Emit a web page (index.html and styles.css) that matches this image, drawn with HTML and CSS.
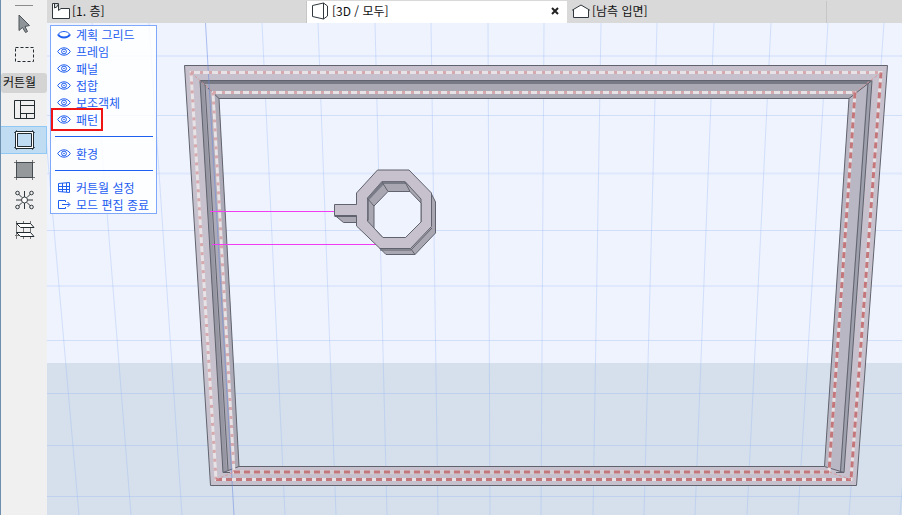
FILE: index.html
```
<!DOCTYPE html>
<html lang="ko">
<head>
    <meta charset="UTF-8">
    <meta name="viewport" content="width=device-width, initial-scale=1.0">
    <title>커튼월</title>
    <link rel="stylesheet" href="styles.css">
</head>
<body>
    <svg class="defs" aria-hidden="true">
        <symbol id="eye" viewBox="0 0 14 11">
            <path d="M0.7 5.5C3.5 0.6 10.5 0.6 13.3 5.5C10.5 10.4 3.5 10.4 0.7 5.5Z" fill="none" stroke="currentColor"/>
            <circle cx="7" cy="5.5" r="2.4" fill="none" stroke="currentColor"/>
            <circle cx="7" cy="5.5" r="0.8" fill="currentColor"/>
        </symbol>
    </svg>

    <aside class="toolbox">
        <div class="grip"></div>
        <button class="tool" aria-label="화살표">
            <svg width="24" height="24" viewBox="0 0 24 24"><path d="M7 3V18.500L10.500 15.500L13.500 20.500L15.500 19.500L13 14.500L17.500 13.500Z" fill="#8f9498" stroke="#4d5459"/></svg>
        </button>
        <button class="tool" aria-label="선택 영역">
            <svg width="24" height="24" viewBox="0 0 24 24"><rect x="3.500" y="5.500" width="18" height="14" fill="none" stroke="#222b30" stroke-dasharray="3 2"/></svg>
        </button>
        <h2>커튼월</h2>
        <button class="tool" aria-label="구성표">
            <svg width="24" height="24" viewBox="0 0 24 24"><path d="M2.500 2.500H22.500V20.500H2.500ZM8.500 2.500V20.500M8.500 7.500H22.500M8.500 15.500H22.500M14.500 15.500V20.500" fill="none" stroke="#222b30"/></svg>
        </button>
        <button class="tool active" aria-label="프레임">
            <svg width="24" height="24" viewBox="0 0 24 24"><path d="M2 4.500H23M2 19.500H23M4.500 2V22M20.500 2V22" stroke="#56626b"/><path d="M3.500 3.500H21.500V20.500H3.500ZM5.500 5.500V18.500H19.500V5.500Z" fill="#fff" fill-rule="evenodd" stroke="#222b30"/></svg>
        </button>
        <button class="tool" aria-label="패널">
            <svg width="24" height="24" viewBox="0 0 24 24"><path d="M2 4.500H23M2 19.500H23M4.500 2V22M20.500 2V22" stroke="#777"/><rect x="4.500" y="4.500" width="16" height="15" fill="#96999c" stroke="#444c52"/></svg>
        </button>
        <button class="tool" aria-label="접합">
            <svg width="24" height="24" viewBox="0 0 24 24" fill="none" stroke="#30383d"><path d="M12.500 3V9M12.500 15V21M4 12H9M16 12H21M6.500 6L10 9.500M18.500 6L15 9.500M6.500 18L10 14.500M18.500 18L15 14.500"/><circle cx="12.500" cy="12" r="3" fill="#fff"/><circle cx="5.500" cy="5" r="1.800"/><circle cx="19.500" cy="5" r="1.800"/><circle cx="5.500" cy="19" r="1.800"/><circle cx="19.500" cy="19" r="1.800"/></svg>
        </button>
        <button class="tool" aria-label="보조객체">
            <svg width="24" height="24" viewBox="0 0 24 24" fill="none" stroke="#222b30"><path d="M4.500 3V21M11.500 3V21M18.500 3V21M3 17.500H20" stroke="#777"/><path d="M4.500 5.500H18.500L22 9.500H8.500ZM4.500 14.500H18.500L22 18.500H8.500Z" fill="#fff"/></svg>
        </button>
    </aside>

    <div class="workspace">
        <nav class="tabs">
            <a class="tab" href="#">
                <svg width="20" height="18" viewBox="0 0 20 18"><path d="M1.500 1.500H7.500V8.500L10 6.500H18.500V16.500H1.500ZM3.500 2V6Q6.500 5.500 7.500 2" fill="#fff" stroke="#30383d"/></svg>
                <span>[1. 층]</span>
            </a>
            <a class="tab current" href="#">
                <svg width="20" height="18" viewBox="0 0 20 18"><path d="M1.500 3.500L12.500 1L16.500 4V14L12.500 17L1.500 14.500ZM12.500 1V17" fill="#fff" stroke="#30383d"/></svg>
                <span>[3D / 모두]</span>
                <svg class="close" width="8" height="8" viewBox="0 0 8 8"><path d="M1 1L7 7M7 1L1 7" stroke="#222" stroke-width="2"/></svg>
            </a>
            <a class="tab" href="#">
                <svg width="20" height="18" viewBox="0 0 20 18"><path d="M2.500 15.500V8H1.500L10 3L18.500 8H17.500V15.500Z" fill="#fff" stroke="#30383d"/></svg>
                <span>[남측 입면]</span>
            </a>
        </nav>

        <main class="viewport">
            <svg class="scene" viewBox="47 23 855 492" preserveAspectRatio="xMinYMin slice">
                <rect x="47" y="23" width="855" height="340" fill="#eef3fe"/>
                <rect x="47" y="363" width="855" height="152" fill="#d5e0ec"/>
                <!-- grid -->
                <path class="grid" d="M47 115.500H902M47 230.500H902M47 340.500H902M47 393.500H902M47 445.500H902M47 496.500H902"/>
                <path class="grid wide" d="M47 56H902M47 173.500H902M47 286H902"/>
                <path class="grid" d="M36 23L79 515M92 23L131 515M149 23L182 515M262 23L285 515M318 23L336 515M375 23L387 515M431 23L438 515M488 23L490 515M544 23L541 515M601 23L593 515M657 23L644 515M714 23L695 515M771 23L747 515M828 23L798 515M884 23L849 515M941 23L900 515"/>
                <!-- outer frame -->
                <path d="M184.500 65.500H887.500L856.500 485.500H210.500ZM219 98.500L239 466.500H824.500L849 98.500Z" fill="#c6c1cc" fill-rule="evenodd"/>
                <path d="M200 81H872L849 98.500H219Z" fill="#aaa8b2"/>
                <path d="M200 81L219 98.500L239 466.500L223 473Z" fill="#adabb7"/>
                <path d="M872 81L849 98.500L824.500 466.500L844 473Z" fill="#bab7c4"/>
                <path d="M200 81H872L868 84H204Z" fill="#777984"/>
                <path d="M200 81L204 85L227 472H223Z" fill="#9697a2"/>
                <path d="M872 81L867 85L840 472H844Z" fill="#9fa0ad"/>
                <path class="edge" d="M184.500 65.500H887.500L856.500 485.500H210.500ZM219 98.500H849L824.500 466.500H239ZM200 80.500H872L844 472.500L824.500 466.500M200 80.500L223 472.500L239 466.500M223 472.500H230M844 472.500H836M868 83L840.500 471M205 85L228 470M200 80.500L219 98.500M872 80.500L849 98.500"/>
                <path class="axis" d="M205.500 23L234 515"/>
                <!-- dashed pattern lines -->
                <path class="dash-base" d="M191 72.500H881L851 479.500H216ZM213 92.500H855L829 472H234Z"/>
                <path class="dash soft" d="M191 72.500H881M213 92.500H855M191 72.500L216 479.500M213 92.500L234 472"/>
                <path class="dash strong" d="M216 479.500H851M881 72.500L851 479.500M855 92.500L829 472"/>
                <path class="dash shade" d="M234 472H829"/>
                <path class="dash strong" d="M234 472H829"/>
                <path class="corner" d="M191 72.500L213 92.500M881 72.500L855 92.500M216 479.500L234 472M851 479.500L829 472"/>
                <!-- guide lines -->
                <path d="M210 211.500H334M212 244.500H376" stroke="#f03cf5"/>
                <!-- octagon ring -->
                <path d="M431 193L435.500 202V233L415 254.500H386L380 248.500Z" fill="#a9a7b2" stroke="#60636d"/>
                <path d="M334.500 215L343.500 222.500H357V215Z" fill="#aaa8b3" stroke="#60636d"/>
                <path d="M377.500 170H409L431.500 193V226.500L410.500 248.500H380L356.500 226V215.500H334.500V204.500H356.500V193Z" fill="#c6c1cc" stroke="#60636d"/>
                <path d="M382 181.500H405L421 199V222L405.500 237.500H383L367.500 221V198Z" fill="#a9a7b2" stroke="#60636d"/>
                <path d="M382 181.500H405L407 184H384L369 200V221L367.500 219V198Z" fill="#787a85"/>
                <path d="M388 191.500H410L421 203V222L405.500 237.500H383L374 228V206Z" fill="#eef3fe" stroke="#60636d"/>
                <path d="M382 182L388 191.500M405 182L410 191.500M367 198L374 206M380 250H411L432 228M410.500 248.500L415 254.500M334.500 216.500H356" fill="none" stroke="#60636d"/>
            </svg>

            <div class="menu">
                <button><svg width="14" height="11" viewBox="0 0 14 11"><path d="M1 5.500C3.500 1.500 10.500 1.500 13 5.500" fill="none" stroke="currentColor"/><path d="M1 5.500C3.500 9.500 10.500 9.500 13 5.500" fill="none" stroke="currentColor" stroke-width="2"/></svg>계획 그리드</button>
                <button><svg width="14" height="11"><use href="#eye"/></svg>프레임</button>
                <button><svg width="14" height="11"><use href="#eye"/></svg>패널</button>
                <button><svg width="14" height="11"><use href="#eye"/></svg>접합</button>
                <button><svg width="14" height="11"><use href="#eye"/></svg>보조객체</button>
                <button class="marked"><svg width="14" height="11"><use href="#eye"/></svg>패턴</button>
                <hr>
                <button><svg width="14" height="11"><use href="#eye"/></svg>환경</button>
                <hr>
                <button><svg width="14" height="11" viewBox="0 0 14 11"><path d="M1.500 1.500L12.500 0.500V10.500L1.500 9.500ZM5.500 1V10M9.500 1V10M1 4.500H12.500M1 7.500H12.500" fill="none" stroke="currentColor"/></svg>커튼월 설정</button>
                <button><svg width="14" height="11" viewBox="0 0 14 11"><path d="M8.500 3V1.500H1.500V9.500H8.500V8M5 5.500H12.500M10.500 3L13 5.500L10.500 8" fill="none" stroke="currentColor"/></svg>모드 편집 종료</button>
            </div>
        </main>
    </div>
</body>
</html>
```
FILE: styles.css
```
*{
    box-sizing: border-box;
}
body{
    margin: 0;
    display: flex;
    min-height: 100vh;
    font-family: "Noto Sans CJK KR", sans-serif;
    font-size: 12px;
    color: #111;
    background-color: #d9d9d9;
}
button{
    margin: 0;
    padding: 0;
    border: 0;
    background: none;
    font: inherit;
    color: inherit;
}
.defs{
    position: absolute;
    width: 0;
    height: 0;
}

/* 도구상자 */
.toolbox{
    width: 47px;
    flex: none;
    display: flex;
    flex-direction: column;
    background-color: #f0f0f0;
    border-left: 1px solid #6f8fae;
}
.grip{
    width: 18px;
    height: 1px;
    margin: 5px auto 3px;
    background-color: #8c8c8c;
}
.tool{
    height: 30px;
    display: flex;
    align-items: center;
    justify-content: center;
}
.tool.active{
    height: 28px;
    margin: 1px 0;
    background-color: #c0dcf3;
    border: 1px solid #90c8f6;
    border-left: 0;
}
.toolbox h2{
    margin: 4px 0 2px;
    padding-left: 2px;
    height: 20px;
    line-height: 18px;
    font-size: 12px;
    font-weight: 400;
    background-color: #d4d4d4;
    border-radius: 3px;
}

/* 탭 */
.workspace{
    flex: 1;
    display: flex;
    flex-direction: column;
    min-width: 0;
}
.tabs{
    display: flex;
    height: 23px;
    padding-top: 1px;
    background-color: #d9d9d9;
}
.tab{
    flex: 0 1 260px;
    display: flex;
    align-items: center;
    gap: 1px;
    padding: 0 8px 2px 4px;
    color: #111;
    text-decoration: none;
    line-height: 20px;
    border-right: 1px solid #c6c6c6;
}
.tab.current{
    background-color: #fff;
    border-right: 0;
}
.close{
    margin-left: auto;
}

/* 3D 화면 */
.viewport{
    position: relative;
    flex: 1;
    background-color: #d5e0ec;
}
.scene{
    position: absolute;
    width: 100%;
    height: 100%;
}
.grid{
    fill: none;
    stroke: #8fb0f2;
    stroke-opacity: 0.3;
}
.wide{
    stroke-width: 2;
    stroke-opacity: 0.15;
}
.axis{
    stroke: #6686e0;
    stroke-opacity: 0.5;
}
.edge{
    fill: none;
    stroke: #60636d;
}
.dash-base{
    fill: none;
    stroke: #e6e2e6;
    stroke-width: 3;
}
.dash{
    fill: none;
    stroke-width: 3;
}
.soft{
    stroke: #d5a9ad;
    stroke-dasharray: 3 6;
}
.strong{
    stroke: #c4777b;
    stroke-dasharray: 6 4;
}
.shade{
    stroke: #cfcbd0;
}
.corner{
    stroke: #d59a9e;
    stroke-dasharray: 3 2;
}

/* 보기 메뉴 */
.menu{
    position: absolute;
    top: 2px;
    left: 3px;
    width: 107px;
    padding: 0 3px 0 4px;
    display: flex;
    flex-direction: column;
    background-color: rgba(255, 255, 255, 0.85);
    border: 1px solid #7fa8fa;
    color: #1f5ff0;
}
.menu button{
    height: 17px;
    padding-left: 2px;
    display: flex;
    align-items: center;
    gap: 5px;
    line-height: 17px;
    white-space: nowrap;
}
.menu .marked{
    align-self: flex-start;
    width: 52px;
    height: 23px;
    margin: -3px 0 -3px -4px;
    padding-left: 4px;
    border: 2px solid #f01414;
}
.menu hr{
    width: 100%;
    margin: 8px 0;
    border: 0;
    border-top: 1px solid #1f5ff0;
}
```
